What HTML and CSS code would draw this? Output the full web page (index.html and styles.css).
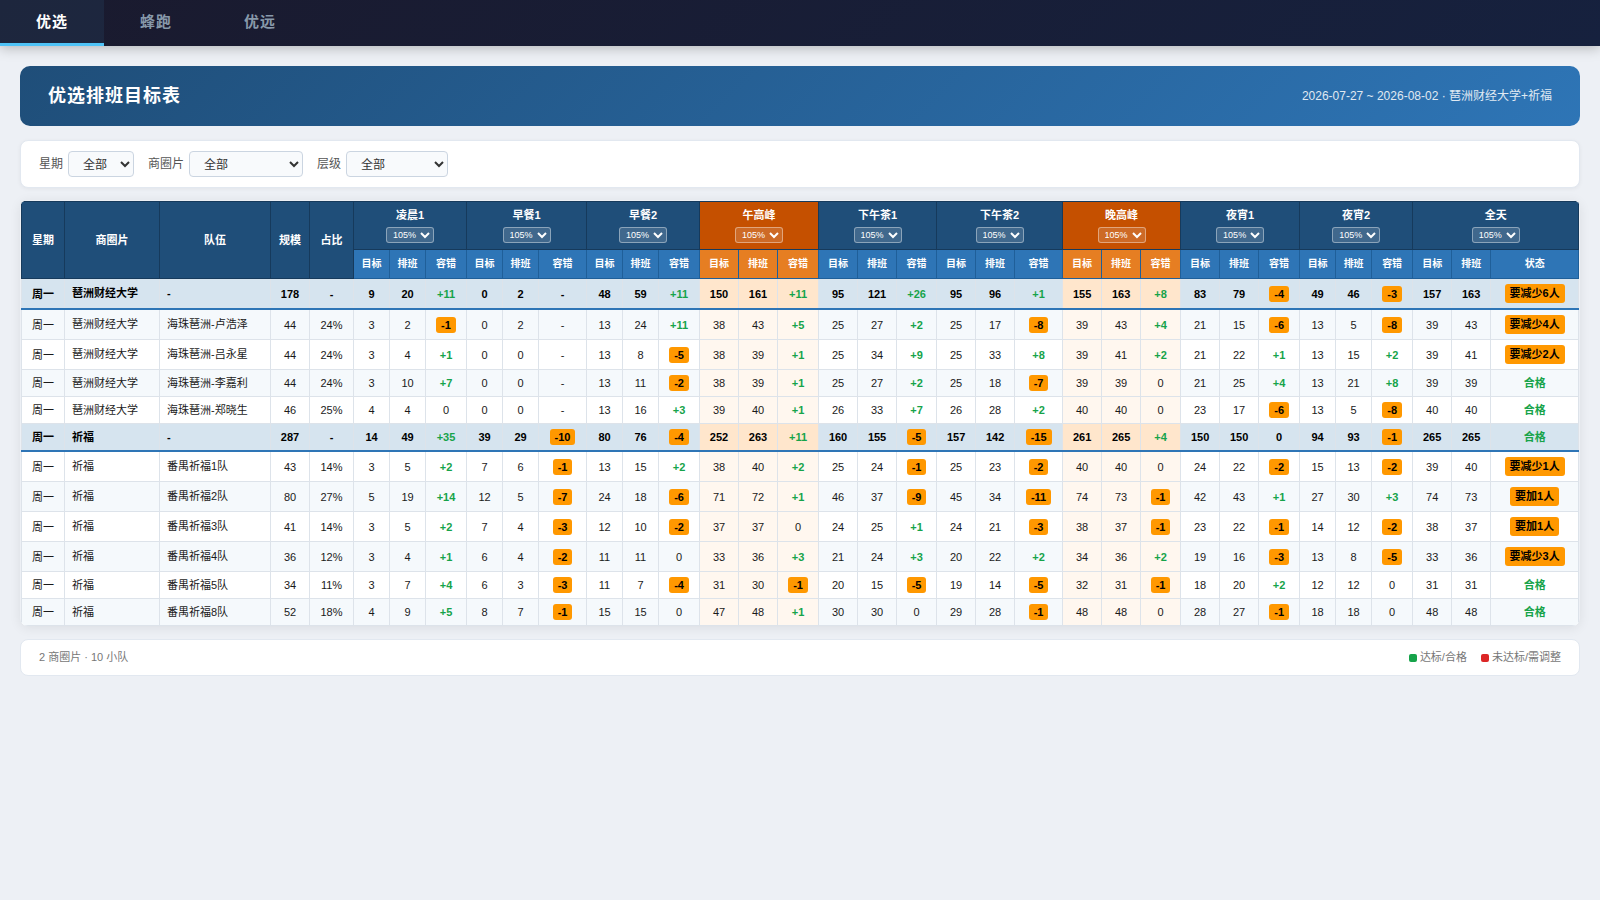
FILE: index.html
```html
<!DOCTYPE html>
<html lang="zh-CN">
<head>
    <meta charset="UTF-8">
    <meta name="viewport" content="width=device-width, initial-scale=1.0">
    <title>优选排班目标表</title>
    <link rel="stylesheet" href="styles.css">
</head>
<body>
    <div class="nav">
        <div class="tab active">优选</div>
        <div class="tab">蜂跑</div>
        <div class="tab">优远</div>
    </div>

    <div class="main">
        <div class="header">
            <h1>优选排班目标表</h1>
            <span class="date">2026-07-27 ~ 2026-08-02 · 琶洲财经大学+祈福</span>
        </div>

        <div class="filters">
            <div class="filter">
                <label for="week">星期</label>
                <select id="week" class="w-week"><option>全部</option><option>周一</option></select>
            </div>
            <div class="filter">
                <label for="area">商圈片</label>
                <select id="area" class="w-area"><option>全部</option><option>琶洲财经大学</option><option>祈福</option></select>
            </div>
            <div class="filter">
                <label for="level">层级</label>
                <select id="level" class="w-level"><option>全部</option><option>商圈片</option><option>队伍</option></select>
            </div>
        </div>

        <div class="table-wrap">
            <table>
                <colgroup id="cols"></colgroup>
                <thead id="thead"></thead>
                <tbody id="tbody"></tbody>
            </table>
        </div>

        <div class="footer">
            <span>2 商圈片 · 10 小队</span>
            <div class="legend">
                <span><i class="dot ok"></i>达标/合格</span>
                <span><i class="dot bad"></i>未达标/需调整</span>
            </div>
        </div>
    </div>
    <script src="script.js"></script>
</body>
</html>
```
FILE: styles.css
```css
*{
    margin: 0;
    padding: 0;
    box-sizing: border-box;
}
body{
    font-family: "Liberation Sans", "Noto Sans CJK SC", sans-serif;
    background: #edf0f5;
    color: #1a1a1a;
}
.nav{
    display: flex;
    height: 46px;
    background: linear-gradient(135deg, #1a1a2e, #16213e);
    box-shadow: 0 2px 12px rgba(0,0,0,.25);
}
.tab{
    padding: 0 36px;
    height: 46px;
    line-height: 43px;
    font-size: 15px;
    font-weight: 600;
    letter-spacing: 1px;
    color: #8899aa;
    border-bottom: 3px solid transparent;
}
.tab.active{
    color: #fff;
    background: rgba(79,195,247,.08);
    border-bottom-color: #4fc3f7;
}
.main{
    padding: 20px;
}
.header{
    display: flex;
    justify-content: space-between;
    align-items: center;
    height: 60px;
    padding: 0 28px;
    margin-bottom: 14px;
    border-radius: 10px;
    color: #fff;
    background: linear-gradient(135deg, #1f4e79, #2e75b6);
}
.header h1{
    font-size: 18px;
    line-height: 24px;
    letter-spacing: 1px;
}
.date{
    font-size: 12px;
    line-height: 16px;
    opacity: .85;
}
.filters{
    display: flex;
    align-items: center;
    gap: 14px;
    height: 48px;
    padding: 0 18px;
    margin-bottom: 12px;
    background: #fff;
    border: 1px solid #e2e8f0;
    border-radius: 8px;
    box-shadow: 0 1px 4px rgba(0,0,0,.05);
}
.filter{
    display: flex;
    align-items: center;
    gap: 5px;
    font-size: 12px;
    line-height: 16px;
    color: #555;
}
.filter select{
    height: 26px;
    padding: 1px 10px 0;
    font-family: inherit;
    font-size: 12px;
    color: #333;
    background: #f8fafc;
    border: 1px solid #cbd5e1;
    border-radius: 4px;
}
.w-week{
    width: 66px;
}
.w-area{
    width: 114px;
}
.w-level{
    width: 102px;
}

/* table */
.table-wrap{
    margin-bottom: 13px;
    padding: 1px 1px 0;
    border-radius: 8px;
    overflow: hidden;
    box-shadow: 0 2px 12px rgba(0,0,0,.08);
}
table{
    width: 1558px;
    table-layout: fixed;
    border-collapse: collapse;
    font-size: 11px;
    line-height: 12px;
    background: #fff;
}
th{
    border: 1px solid #163a5c;
    background: #1f4e79;
    color: #fff;
    font-size: 11px;
    line-height: 15px;
}
.group{
    height: 48px;
}
.group div{
    margin-bottom: 4px;
}
.group select{
    display: block;
    width: 48px;
    height: 16px;
    margin: 0 auto;
    padding: 0 0 0 2px;
    font-family: inherit;
    font-size: 9px;
    color: #fff;
    background: rgba(255,255,255,.15);
    border: 1px solid rgba(255,255,255,.4);
    border-radius: 3px;
}
.sub th{
    height: 29px;
    padding-bottom: 2px;
    font-size: 10px;
    background: #2e75b6;
    border-color: #1f5f99;
}
.group.peak{
    background: #c55000;
}
.sub th.peak{
    background: #e67e22;
}
td{
    padding: 5px 2px;
    border: 1px solid #dde3ea;
    text-align: center;
    white-space: nowrap;
}
td.left{
    padding-left: 7px;
    text-align: left;
    line-height: 15px;
}
tbody tr:nth-child(even) td{
    background: #f5f9fc;
}
tbody tr td.peak,
tbody tr:nth-child(even) td.peak{
    background: #fff7ef;
}
tbody tr.total td,
tbody tr.total:nth-child(even) td{
    font-weight: bold;
    color: #000;
    background: #d6e4ef;
    border-bottom: 2px solid #2e75b6;
}
tbody tr.total td.peak,
tbody tr.total:nth-child(even) td.peak{
    background: #ffe6cc;
}
.plus{
    color: #16a34a;
    font-weight: bold;
}
.badge{
    display: inline-block;
    padding: 2px 5px;
    border-radius: 3px;
    background: #ff9800;
    color: #000;
    font-weight: bold;
    line-height: 12px;
    vertical-align: top;
}
.badge.text{
    line-height: 15px;
}

.footer{
    display: flex;
    justify-content: space-between;
    align-items: center;
    height: 37px;
    padding: 0 18px;
    background: #fff;
    border: 1px solid #e2e8f0;
    border-radius: 8px;
    font-size: 11px;
    line-height: 15px;
    color: #777;
}
.legend{
    display: flex;
    gap: 14px;
}
.dot{
    display: inline-block;
    width: 8px;
    height: 8px;
    margin-right: 3px;
    border-radius: 2px;
    vertical-align: -1px;
}
.ok{
    background: #16a34a;
}
.bad{
    background: #dc2626;
}
```
FILE: script.js
```js
var cols = [43, 95, 111, 39, 44, 36, 36, 41, 36, 36, 48, 36, 36, 41, 39, 39, 41, 39, 39, 40,
    39, 39, 48, 39, 39, 40, 39, 39, 41, 36, 36, 41, 39, 39, 88];
var groups = ["凌晨1", "早餐1", "早餐2", "午高峰", "下午茶1", "下午茶2", "晚高峰", "夜宵1", "夜宵2", "全天"];

// 商圈片, 队伍, 规模, 占比, 各时段 目标 排班 容错, 状态
var rows = [
    ["琶洲财经大学", "-", "178", "-", "9 20 +11 0 2 - 48 59 +11 150 161 +11 95 121 +26 95 96 +1 155 163 +8 83 79 -4 49 46 -3 157 163", "要减少6人"],
    ["琶洲财经大学", "海珠琶洲-卢浩泽", "44", "24%", "3 2 -1 0 2 - 13 24 +11 38 43 +5 25 27 +2 25 17 -8 39 43 +4 21 15 -6 13 5 -8 39 43", "要减少4人"],
    ["琶洲财经大学", "海珠琶洲-吕永星", "44", "24%", "3 4 +1 0 0 - 13 8 -5 38 39 +1 25 34 +9 25 33 +8 39 41 +2 21 22 +1 13 15 +2 39 41", "要减少2人"],
    ["琶洲财经大学", "海珠琶洲-李嘉利", "44", "24%", "3 10 +7 0 0 - 13 11 -2 38 39 +1 25 27 +2 25 18 -7 39 39 0 21 25 +4 13 21 +8 39 39", "合格"],
    ["琶洲财经大学", "海珠琶洲-郑晓生", "46", "25%", "4 4 0 0 0 - 13 16 +3 39 40 +1 26 33 +7 26 28 +2 40 40 0 23 17 -6 13 5 -8 40 40", "合格"],
    ["祈福", "-", "287", "-", "14 49 +35 39 29 -10 80 76 -4 252 263 +11 160 155 -5 157 142 -15 261 265 +4 150 150 0 94 93 -1 265 265", "合格"],
    ["祈福", "番禺祈福1队", "43", "14%", "3 5 +2 7 6 -1 13 15 +2 38 40 +2 25 24 -1 25 23 -2 40 40 0 24 22 -2 15 13 -2 39 40", "要减少1人"],
    ["祈福", "番禺祈福2队", "80", "27%", "5 19 +14 12 5 -7 24 18 -6 71 72 +1 46 37 -9 45 34 -11 74 73 -1 42 43 +1 27 30 +3 74 73", "要加1人"],
    ["祈福", "番禺祈福3队", "41", "14%", "3 5 +2 7 4 -3 12 10 -2 37 37 0 24 25 +1 24 21 -3 38 37 -1 23 22 -1 14 12 -2 38 37", "要加1人"],
    ["祈福", "番禺祈福4队", "36", "12%", "3 4 +1 6 4 -2 11 11 0 33 36 +3 21 24 +3 20 22 +2 34 36 +2 19 16 -3 13 8 -5 33 36", "要减少3人"],
    ["祈福", "番禺祈福5队", "34", "11%", "3 7 +4 6 3 -3 11 7 -4 31 30 -1 20 15 -5 19 14 -5 32 31 -1 18 20 +2 12 12 0 31 31", "合格"],
    ["祈福", "番禺祈福8队", "52", "18%", "4 9 +5 8 7 -1 15 15 0 47 48 +1 30 30 0 29 28 -1 48 48 0 28 27 -1 18 18 0 48 48", "合格"]
];

function isPeak(g) {
    return g == 3 || g == 6;
}

function renderHead() {
    var top = "", sub = "";
    ["星期", "商圈片", "队伍", "规模", "占比"].forEach(function (t) {
        top += '<th rowspan="2">' + t + '</th>';
    });
    groups.forEach(function (name, g) {
        var peak = isPeak(g) ? " peak" : "";
        top += '<th colspan="3" class="group' + peak + '"><div>' + name + '</div><select><option>105%</option></select></th>';
        ["目标", "排班", g == 9 ? "状态" : "容错"].forEach(function (t) {
            sub += '<th class="' + peak + '">' + t + '</th>';
        });
    });
    document.getElementById("thead").innerHTML = '<tr>' + top + '</tr><tr class="sub">' + sub + '</tr>';
}

function cellText(v) {
    if (v[0] == "+" || v == "合格") return '<span class="plus">' + v + '</span>';
    if (v[0] == "要") return '<span class="badge text">' + v + '</span>';
    if (/^-\d/.test(v)) return '<span class="badge">' + v + '</span>';
    return v;
}

function renderBody() {
    var html = "";
    rows.forEach(function (r) {
        html += '<tr class="' + (r[1] == "-" ? "total" : "") + '"><td>周一</td>';
        html += '<td class="left">' + r[0] + '</td><td class="left">' + r[1] + '</td><td>' + r[2] + '</td><td>' + r[3] + '</td>';
        r[4].split(" ").concat(r[5]).forEach(function (v, i) {
            html += '<td class="' + (isPeak(Math.floor(i / 3)) ? "peak" : "") + '">' + cellText(v) + '</td>';
        });
        html += '</tr>';
    });
    document.getElementById("tbody").innerHTML = html;
}

document.getElementById("cols").innerHTML = cols.map(function (w) {
    return '<col style="width:' + w + 'px">';
}).join("");
renderHead();
renderBody();
```
